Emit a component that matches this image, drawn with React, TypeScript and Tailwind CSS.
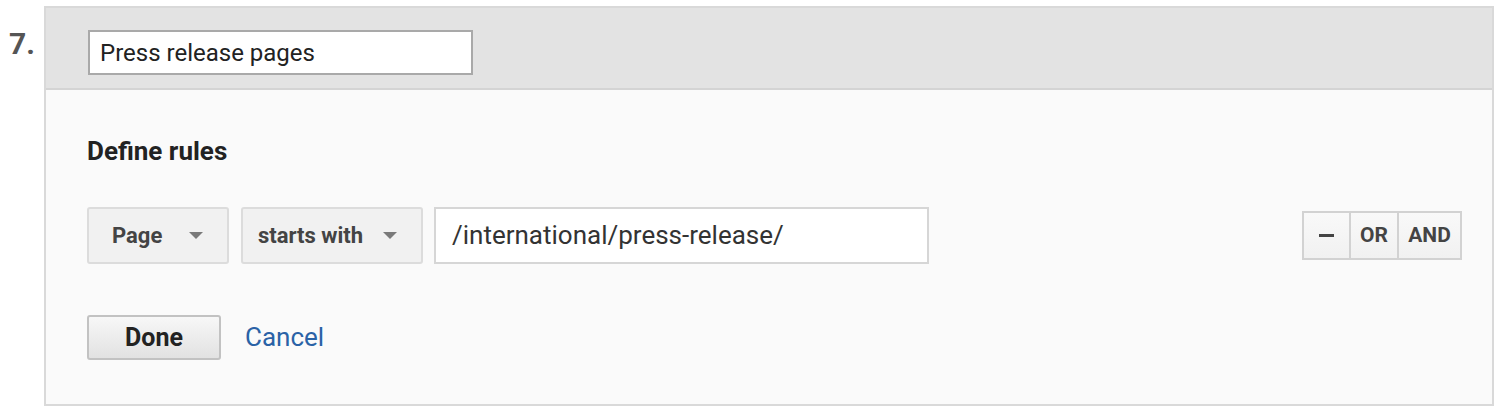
import React from 'react';

const Caret = () => (
  <svg width="14" height="8" viewBox="0 0 14 8" className="shrink-0">
    <path d="M0 0 L14 0 L7 7 Z" fill="#7a7a7a" />
  </svg>
);

const Select = ({ label, className }: { label: string; className: string }) => (
  <div
    className={`${className} h-[57px] flex items-center justify-between pr-[24px] bg-[#f1f1f1] border-2 border-[#dcdcdc] rounded-[3px] text-[22px] font-bold text-[#444]`}
  >
    <span>{label}</span>
    <Caret />
  </div>
);

const App = () => {
  return (
    <div className="w-[1500px] h-[416px] bg-white flex pt-[6px] font-['Roboto',sans-serif]">
      <div className="w-[44px] pl-[9px] pt-[20px] text-[30px] leading-[36px] font-bold text-[#555]">7.</div>

      <div className="w-[1450px] h-[400px] border-2 border-[#d9d9d9] flex flex-col">
        {/* header band */}
        <div className="h-[82px] bg-[#e3e3e3] border-b-2 border-[#d4d4d4] pl-[42px] pt-[22px]">
          <div className="w-[385px] h-[45px] bg-white border-2 border-[#a9a9a9] flex items-center pl-[10px] text-[24px] text-[#222]">
            Press release pages
          </div>
        </div>

        {/* body */}
        <div className="flex-1 bg-[#fafafa] pl-[41px] pr-[30px] pt-[45px]">
          <h3 className="text-[26px] leading-[32px] font-bold text-[#222]">Define rules</h3>

          <div className="mt-[40px] flex items-center">
            <Select label="Page" className="w-[142px] pl-[23px]" />
            <div className="ml-[12px]">
              <Select label="starts with" className="w-[182px] pl-[15px]" />
            </div>
            <div className="ml-[11px] w-[495px] h-[57px] bg-white border-2 border-[#d6d6d6] flex items-center pl-[16px] text-[26px] text-[#333]">
              /international/press-release/
            </div>

            <div className="ml-auto flex h-[49px] border-2 border-[#d2d2d2] bg-gradient-to-b from-[#f9f9f9] to-[#f1f1f1] text-[21px] font-bold text-[#444]">
              <div className="w-[47px] flex items-center justify-center border-r-2 border-[#d2d2d2]">
                <span className="block w-[15px] h-[3px] bg-[#444]" />
              </div>
              <div className="w-[48px] flex items-center justify-center border-r-2 border-[#d2d2d2]">OR</div>
              <div className="w-[61px] flex items-center justify-center">AND</div>
            </div>
          </div>

          <div className="mt-[51px] flex items-center">
            <button className="w-[134px] h-[45px] bg-gradient-to-b from-[#f7f7f7] to-[#e2e2e2] border-2 border-[#c2c2c2] rounded-[3px] text-[25px] font-bold text-[#222]">
              Done
            </button>
            <a className="ml-[24px] text-[26px] text-[#2a62a6] cursor-pointer">Cancel</a>
          </div>
        </div>
      </div>
    </div>
  );
};

export default App;
